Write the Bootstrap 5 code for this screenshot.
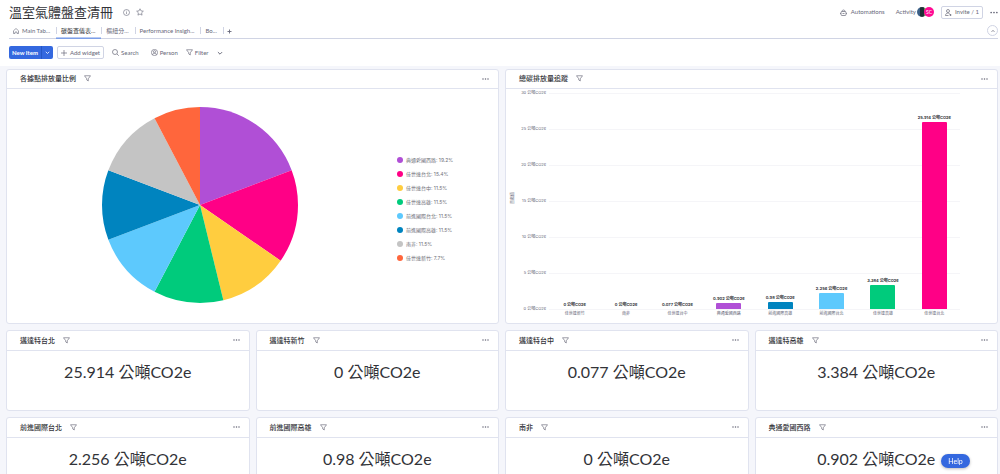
<!DOCTYPE html>
<html lang="en">
<head>
<meta charset="utf-8">
<meta name="viewport" content="width=device-width, initial-scale=1">
<title>溫室氣體盤查清冊</title>
<link href="https://cdn.jsdelivr.net/npm/bootstrap@5.3.0/dist/css/bootstrap.min.css" rel="stylesheet">
<style>
  :root { --ink: #323338; --soft: #676879; --line: #d0d4e4; --edge: #e0e3ef; --brand: #3468df; }
  body { font-family: Lato, "Noto Sans CJK TC", sans-serif; font-size: 6px; line-height: 8px; color: var(--soft); background: #f5f6fb; }
  a, button { color: inherit; }
  button { background: none; border: 0; padding: 0; }
  svg { display: block; flex: none; fill: none; stroke: currentColor; }
  .topbar { background: #fff; padding: 4px 2px 7px 9px; }
  h1 { font-size: 13px; line-height: 16px; color: var(--ink); }
  .title-row { gap: 6px; }
  .tool-row { gap: 7px; }
  .avatars { margin-left: 1px; }
  .face { width: 10px; height: 10px; border-radius: 50%; font-size: 5px; line-height: 10px; color: #fff; text-align: center; }
  .face-photo { background: linear-gradient(90deg, #3b5f86 35%, #1d3036 35% 70%, #5e9b52 70%); }
  .face-sc { background: #ff0a93; margin-left: -3px; }
  .outlined { border: 1px solid var(--line); border-radius: 2px; height: 13px; padding: 0 3px; gap: 3px; }
  .tabs { height: 16px; margin-top: 3px; border-bottom: 1px solid var(--line); }
  .tabs a { height: 16px; padding: 0 6px 0 5px; gap: 3px; position: relative; }
  .tabs a.first { padding-left: 4px; }
  .tabs a + a::before { content: ""; position: absolute; left: 0; top: 4px; height: 7px; border-left: 1px solid var(--line); }
  .tabs a.current { color: var(--ink); border-bottom: 1px solid #7c9ee8; box-shadow: inset 0 -1px #b8cbf3; }
  .fold { width: 11px; height: 11px; border: 1px solid var(--line); border-radius: 50%; margin-top: 2px; }
  .actions { margin-top: 7px; }
  .actions .plain { gap: 2px; }
  .new-item { background: var(--brand); color: #fff; border-radius: 2px; height: 13px; overflow: hidden; }
  .new-item button { height: 13px; padding: 0 3px; font-weight: 700; }
  .new-item button + button { border-left: 1px solid #2456c4; }
  .board { padding: 3px 2px 0 6px; gap: 6px; display: grid; grid-template-columns: repeat(4, 1fr); }
  .wide { grid-column: span 2; }
  .widget { background: #fff; border: 1px solid var(--edge); border-radius: 3px; min-width: 0; }
  .widget-head { height: 20px; padding: 0 9px 1px 13px; border-bottom: 1px solid var(--edge); color: var(--soft); }
  .wide .widget-head { height: 19px; }
  .widget-head h2 { font-size: 7px; line-height: 10px; font-weight: 500; margin: 0 8px 1px 0; color: var(--ink); }
  .figure-value { height: 59px; padding-top: 10px; font-size: 16px; line-height: 22px; color: var(--ink); text-align: center; }
  .big-body { height: 234px; }
  .pie { width: 196px; height: 196px; margin-left: 95px; margin-top: 18px; }
  .legend { margin: 64px 0 0 99px; font-size: 5px; font-family: Inter, "Noto Sans CJK TC", sans-serif; color: #6f7079; }
  .legend li { height: 14px; gap: 3px; }
  .dot { width: 6px; height: 6px; border-radius: 50%; }
  .chart { padding: 1px 37px 0 4px; font: 4px/6px Inter, "Noto Sans CJK TC", sans-serif; }
  .axis-name { writing-mode: vertical-rl; text-orientation: sideways; transform: rotate(180deg); height: 216px; text-align: center; width: 6px; }
  .scale { height: 222px; width: 30px; text-align: right; margin-right: 3px; }
  .plot { height: 217px; margin-top: 3px; background: repeating-linear-gradient(#f5f5f8 0 1px, transparent 1px 36px); }
  .plot > div { height: 216px; }
  .plot span { color: var(--ink); font-weight: 700; white-space: nowrap; margin-bottom: 1px; }
  .column-bar { width: 25px; border-radius: 1px 1px 0 0; }
  .names { margin-top: 1px; }
  .names div, .plot > div { flex: 1 1 0; min-width: 0; text-align: center; }
  .help { position: fixed; right: 30px; bottom: 6px; width: 29px; height: 14px; border-radius: 7px; background: var(--brand); color: #fff; font-size: 7px; box-shadow: 0 1px 3px #0004; }
</style>
</head>
<body>
<svg width="0" height="0" class="position-absolute" aria-hidden="true">
  <symbol id="funnel" viewBox="0 0 14 14"><path d="M1 1.500h12L8.500 7.500V12L5.500 10V7.500z" stroke-width="1.300" stroke-linejoin="round"/></symbol>
  <symbol id="dots" viewBox="0 0 14 4"><g fill="currentColor" stroke="none"><circle cx="2" cy="2" r="1.500"/><circle cx="7" cy="2" r="1.500"/><circle cx="12" cy="2" r="1.500"/></g></symbol>
  <symbol id="down" viewBox="0 0 10 10"><path d="M1.500 3.500 5 7l3.500-3.500" stroke-width="1.600"/></symbol>
</svg>

<header class="topbar">
  <div class="title-row d-flex align-items-center">
    <h1 class="m-0 fw-normal">溫室氣體盤查清冊</h1>
    <button class="ms-1" aria-label="Info"><svg width="7" height="7" viewBox="0 0 14 14" stroke-width="1.200"><circle cx="7" cy="7" r="6"/><path d="M7 6.200v4M7 3.500v1.500"/></svg></button>
    <button aria-label="Favorite"><svg width="8" height="8" viewBox="0 0 16 16" stroke-width="1.200"><path d="m8 1.500 2 4.300 4.700.6-3.500 3.200.9 4.700L8 12l-4.100 2.300.9-4.700L1.300 6.400 6 5.800z" stroke-linejoin="round"/></svg></button>
    <div class="tool-row d-flex align-items-center ms-auto">
      <button class="d-flex align-items-center gap-1"><svg width="7" height="7" viewBox="0 0 14 14" stroke-width="1.400"><rect x="2" y="5" width="10" height="8" rx="2"/><path d="M4 5c0-4 6-4 6 0M0 9h2M12 9h2M5 9h4"/></svg>Automations</button>
      <button class="d-flex align-items-center ms-1">Activity
        <span class="avatars d-flex"><span class="face face-photo"></span><span class="face face-sc">SC</span></span></button>
      <button class="outlined d-flex align-items-center"><svg width="7" height="7" viewBox="0 0 14 14" stroke-width="1.400"><circle cx="6" cy="4" r="3"/><path d="M1 13c0-6 8-6 9-2M1 13h6M9 12h4M11 10v4"/></svg>Invite / 1</button>
      <button aria-label="More"><svg width="8" height="3"><use href="#dots"/></svg></button>
    </div>
  </div>

  <nav class="tabs d-flex">
    <a href="#" class="first d-flex align-items-center text-decoration-none"><svg width="6" height="6" viewBox="0 0 12 12" stroke-width="1.200"><path d="M1 5.500 6 1l5 4.500V11H8V8H4v3H1z" stroke-linejoin="round"/></svg>Main Tab...</a>
    <a href="#" class="current d-flex align-items-center text-decoration-none">碳盤查儀表...</a>
    <a href="#" class="d-flex align-items-center text-decoration-none">樞紐分...</a>
    <a href="#" class="d-flex align-items-center text-decoration-none">Performance Insigh...</a>
    <a href="#" class="d-flex align-items-center text-decoration-none">Bo...</a>
    <a href="#" class="d-flex align-items-center text-decoration-none px-1" aria-label="Add view"><svg width="5" height="5" viewBox="0 0 10 10" stroke-width="1.800"><path d="M5 1v8M1 5h8"/></svg></a>
    <button class="fold d-flex align-items-center justify-content-center ms-auto" aria-label="Collapse"><svg width="4" height="4" viewBox="0 0 10 10" stroke-width="2"><path d="M1.500 7 5 3.500 8.500 7"/></svg></button>
  </nav>

  <div class="actions d-flex align-items-center">
    <div class="new-item d-flex">
      <button>New Item</button>
      <button aria-label="More item types"><svg width="5" height="5" stroke-width="2"><use href="#down"/></svg></button>
    </div>
    <button class="outlined d-flex align-items-center ms-1"><svg width="6" height="6" viewBox="0 0 12 12" stroke-width="1.400"><path d="M6 0v12M0 6h12"/></svg>Add widget</button>
    <button class="plain d-flex align-items-center ms-2"><svg width="7" height="7" viewBox="0 0 14 14" stroke-width="1.400"><circle cx="6" cy="6" r="5"/><path d="m10 10 3.500 3.500"/></svg>Search</button>
    <button class="plain d-flex align-items-center ms-2 ps-1"><svg width="7" height="7" viewBox="0 0 14 14" stroke-width="1.300"><circle cx="7" cy="7" r="6.200"/><circle cx="7" cy="5.500" r="2.200"/><path d="M3 11.500c1-4 7-4 8 0"/></svg>Person</button>
    <button class="plain d-flex align-items-center ms-2"><svg width="7" height="7"><use href="#funnel"/></svg>Filter</button>
    <button class="ms-2" aria-label="Filter options"><svg width="6" height="6"><use href="#down"/></svg></button>
  </div>
</header>

<main class="board" id="board">
  <section class="widget wide">
    <div class="widget-head d-flex align-items-center"><h2>各據點排放量比例</h2><svg width="7" height="7"><use href="#funnel"/></svg><button class="ms-auto" aria-label="More"><svg width="7" height="2"><use href="#dots"/></svg></button></div>
    <div class="big-body d-flex">
      <svg class="pie" viewBox="0 0 196 196" role="img" aria-label="各據點排放量比例"><g id="slices" transform="rotate(-90 98 98)" stroke-width="98"></g></svg>
      <ul class="legend list-unstyled" id="legend"></ul>
    </div>
  </section>
  <section class="widget wide">
    <div class="widget-head d-flex align-items-center"><h2>總碳排放量追蹤</h2><svg width="7" height="7"><use href="#funnel"/></svg><button class="ms-auto" aria-label="More"><svg width="7" height="2"><use href="#dots"/></svg></button></div>
    <div class="big-body">
      <div class="chart d-flex">
        <div class="axis-name">貢獻值</div>
        <div class="scale d-flex flex-column justify-content-between">
          <div>30 公噸CO2e</div><div>25 公噸CO2e</div><div>20 公噸CO2e</div><div>15 公噸CO2e</div><div>10 公噸CO2e</div><div>5 公噸CO2e</div><div>0 公噸CO2e</div>
        </div>
        <div class="flex-grow-1">
          <div class="plot d-flex" id="plot"></div>
          <div class="names d-flex" id="names"></div>
        </div>
      </div>
    </div>
  </section>
</main>
<button class="help">Help</button>

<script src="https://cdn.jsdelivr.net/npm/bootstrap@5.3.0/dist/js/bootstrap.bundle.min.js"></script>
<script>
  const get = id => document.getElementById(id);

  // Share of each site, in units of 1/26 of the whole
  let start = 0;
  [['典通愛國西路', 5, '19.2%', '#b04fd6'], ['佳世達台北', 4, '15.4%', '#ff0086'],
   ['佳世達台中', 3, '11.5%', '#ffcd3f'], ['佳世達高雄', 3, '11.5%', '#00cb7c'],
   ['前進國際台北', 3, '11.5%', '#5dc9fd'], ['前進國際高雄', 3, '11.5%', '#0084bf'],
   ['南非', 3, '11.5%', '#c4c4c4'], ['佳世達新竹', 2, '7.7%', '#ff663c']
  ].forEach(([name, part, share, color]) => {
    get('slices').insertAdjacentHTML('beforeend',
      `<circle cx="98" cy="98" r="49" pathLength="26" stroke="${color}" stroke-dasharray="${part} 26" stroke-dashoffset="${-start}"/>`);
    get('legend').insertAdjacentHTML('beforeend',
      `<li class="d-flex align-items-center"><span class="dot" style="background:${color}"></span>${name}: ${share}</li>`);
    start += part;
  });

  // Emissions per site, in tonnes
  [['佳世達新竹', 0, ''], ['南非', 0, ''], ['佳世達台中', 0.077, '#ffcd3f'], ['典通愛國西路', 0.902, '#b04fd6'],
   ['前進國際高雄', 0.98, '#0084bf'], ['前進國際台北', 2.256, '#5dc9fd'], ['佳世達高雄', 3.384, '#00cb7c'], ['佳世達台北', 25.914, '#ff0086']
  ].forEach(([name, tonnes, color]) => {
    const height = tonnes < 0.1 ? 0 : tonnes / 30 * 100;
    get('plot').insertAdjacentHTML('beforeend',
      `<div class="d-flex flex-column align-items-center justify-content-end"><span>${tonnes} 公噸CO2e</span><i class="column-bar" style="height:${height}%;background:${color}"></i></div>`);
    get('names').insertAdjacentHTML('beforeend', `<div>${name}</div>`);
  });

  [['邁達特台北', '25.914'], ['邁達特新竹', '0'], ['邁達特台中', '0.077'], ['邁達特高雄', '3.384'],
   ['前進國際台北', '2.256'], ['前進國際高雄', '0.98'], ['南非', '0'], ['典通愛國西路', '0.902']
  ].forEach(([name, value]) => get('board').insertAdjacentHTML('beforeend',
    `<section class="widget"><div class="widget-head d-flex align-items-center"><h2>${name}</h2><svg width="7" height="7"><use href="#funnel"/></svg><button class="ms-auto" aria-label="More"><svg width="7" height="2"><use href="#dots"/></svg></button></div><div class="figure-value">${value} 公噸CO2e</div></section>`));
</script>
</body>
</html>
